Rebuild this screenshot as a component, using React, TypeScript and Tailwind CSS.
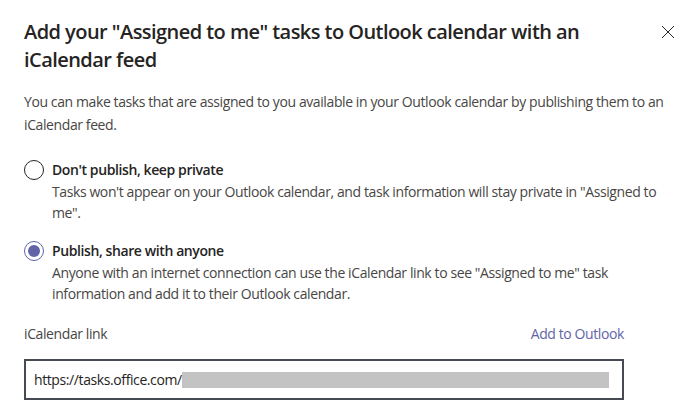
import { useState } from "react";

/**
 * Dialog for publishing "Assigned to me" tasks as an iCalendar feed.
 */

type Choice = "private" | "public";

interface RadioOptionProps {
  checked: boolean;
  label: string;
  description: string;
  onSelect: () => void;
}

function RadioOption({ checked, label, description, onSelect }: RadioOptionProps) {
  return (
    <div className="flex gap-[8px] cursor-pointer" onClick={onSelect}>
      <div
        className={
          checked
            ? "mt-[1px] w-[20px] h-[20px] shrink-0 rounded-full border border-[#6264a7] flex items-center justify-center"
            : "mt-[1px] w-[20px] h-[20px] shrink-0 rounded-full border border-[#252423]"
        }
      >
        {checked && <div className="w-[12px] h-[12px] rounded-full bg-[#6264a7]" />}
      </div>
      <div className="flex flex-col">
        <span className="text-[14px] leading-[22px] font-semibold text-[#252423]">{label}</span>
        <span className="text-[14px] leading-[21px] text-[#484644]">{description}</span>
      </div>
    </div>
  );
}

export default function App() {
  const [choice, setChoice] = useState<Choice>("public");

  return (
    <div
      className="w-[700px] h-[420px] bg-white overflow-hidden pl-[24px] pr-[24px] pt-[18px] tracking-[-0.4px]"
      style={{ fontFamily: '"Open Sans", "Noto Sans", sans-serif' }}
    >
      {/* Header */}
      <div className="flex items-start justify-between">
        <h1 className="w-[600px] text-[20px] leading-[28px] font-semibold tracking-[-0.55px] text-[#252423]">
          Add your "Assigned to me" tasks to Outlook calendar with an iCalendar feed
        </h1>
        <button className="mt-[7px] mr-[1px] w-[14px] h-[14px] text-[#252423]" aria-label="Close">
          <svg viewBox="0 0 14 14" width="14" height="14" fill="none" stroke="currentColor" strokeWidth="1">
            <path d="M1 1 L13 13 M13 1 L1 13" />
          </svg>
        </button>
      </div>

      {/* Intro */}
      <p className="mt-[16px] text-[14px] leading-[23px] text-[#484644]">
        You can make tasks that are assigned to you available in your Outlook calendar by publishing them to an
        iCalendar feed.
      </p>

      {/* Options */}
      <div className="mt-[23px] flex flex-col gap-[17px]">
        <RadioOption
          checked={choice === "private"}
          label="Don't publish, keep private"
          description={'Tasks won\'t appear on your Outlook calendar, and task information will stay private in "Assigned to me".'}
          onSelect={() => setChoice("private")}
        />
        <RadioOption
          checked={choice === "public"}
          label="Publish, share with anyone"
          description={'Anyone with an internet connection can use the iCalendar link to see "Assigned to me" task information and add it to their Outlook calendar.'}
          onSelect={() => setChoice("public")}
        />
      </div>

      {/* Link */}
      <div className="mt-[20px] w-[600px]">
        <div className="flex justify-between text-[14px] leading-[20px]">
          <span className="text-[#484644]">iCalendar link</span>
          <a className="text-[#6264a7]">Add to Outlook</a>
        </div>
        <div className="mt-[15px] h-[41px] border-2 border-[#464a52] flex items-center pl-[8px] pr-[13px]">
          <span className="text-[14px] text-[#252423]">https://tasks.office.com/</span>
          <div className="flex-1 h-[16px] bg-[#c3c3c3]" />
        </div>
      </div>
    </div>
  );
}
